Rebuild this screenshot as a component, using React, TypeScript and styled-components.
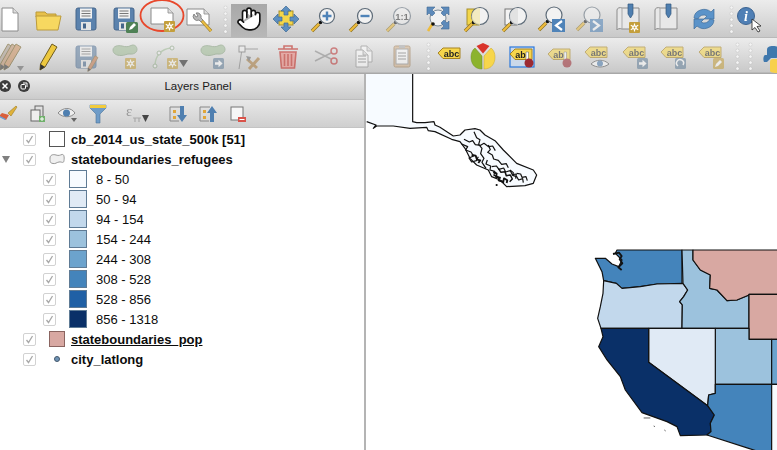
import React from "react";
import styled, { createGlobalStyle } from "styled-components";
import { Hand } from "lucide-react";

const GlobalStyle = createGlobalStyle`
  html, body {
    margin: 0;
    padding: 0;
    background: #fff;
  }
  #root {
    width: 777px;
    height: 450px;
    overflow: hidden;
  }
`;

const Window = styled.div`
  width: 777px;
  height: 450px;
  display: flex;
  flex-direction: column;
  overflow: hidden;
  font-family: "Liberation Sans", Arial, sans-serif;
`;

const ToolRow = styled.div<{ $height: number; $pad: number }>`
  flex: none;
  box-sizing: border-box;
  height: ${(p) => p.$height}px;
  display: flex;
  align-items: stretch;
  margin-left: -9px;
  width: 800px;
  padding-top: ${(p) => p.$pad}px;
  border-bottom: 1px solid #b9b9b9;
  background: linear-gradient(#ececec, #e2e2e2 30%, #c9c9c9);
`;

const Tool = styled.div<{ $w?: number; $dim?: boolean; $active?: boolean }>`
  position: relative;
  flex: none;
  width: ${(p) => p.$w ?? 38}px;
  display: flex;
  align-items: center;
  justify-content: center;
  background: ${(p) =>
    p.$active ? "linear-gradient(transparent 3px, #a8a8a8 3px, #b8b8b8)" : "none"};
  svg {
    flex: none;
    overflow: visible;
    opacity: ${(p) => (p.$dim ? 0.55 : 1)};
    filter: blur(0.35px);
  }
`;

const Handle = styled.div<{ $w: number }>`
  flex: none;
  width: ${(p) => p.$w}px;
  display: flex;
  flex-direction: column;
  align-items: center;
  justify-content: center;
  gap: 3px;
  i {
    width: 3px;
    height: 3px;
    border-radius: 50%;
    background: #f4f4f4;
    box-shadow: 0 0 1px #999;
  }
`;

const Annotation = styled.svg`
  position: absolute;
  left: -3px;
  top: -3px;
  width: 46px;
  height: 36px;
  filter: none !important;
`;

const Main = styled.div`
  flex: 1;
  min-height: 0;
  display: flex;
  border-top: 1px solid #a8a8a8;
`;

const Panel = styled.div`
  flex: none;
  box-sizing: border-box;
  width: 366px;
  display: flex;
  flex-direction: column;
  border-right: 2px solid #b4b4b4;
`;

const TitleBar = styled.div`
  flex: none;
  height: 26px;
  display: flex;
  align-items: center;
  padding-bottom: 2px;
  background: linear-gradient(#ececec, #cbcbcb);
  border-bottom: 1px solid #bdbdbd;
  box-sizing: border-box;
`;

const DockButton = styled.div`
  flex: none;
  width: 12px;
  height: 12px;
  margin-left: -1px;
  margin-right: 8px;
  border-radius: 50%;
  background: #3c3c3c;
  display: flex;
  align-items: center;
  justify-content: center;
`;

const PanelTitle = styled.div`
  flex: 1;
  text-align: center;
  font-size: 11.5px;
  color: #1a1a1a;
  padding-right: 6px;
`;

const PanelTools = styled.div`
  flex: none;
  box-sizing: border-box;
  height: 28px;
  display: flex;
  align-items: center;
  margin-left: -7px;
  background: linear-gradient(#e8e8e8, #cfcfcf);
  border-bottom: 1px solid #c4c4c4;
  width: 371px;
`;

const PanelTool = styled(Tool)`
  width: ${(p) => p.$w ?? 30}px;
  height: 26px;
`;

const LayerList = styled.div`
  flex: 1;
  background: #fff;
  padding-top: 1px;
`;

const LayerRow = styled.div<{ $child?: boolean }>`
  height: 20px;
  display: flex;
  align-items: center;
  padding-left: ${(p) => (p.$child ? 43 : 23)}px;
  position: relative;
`;

const Expander = styled.span`
  position: absolute;
  left: 2px;
  top: 7px;
  width: 0;
  height: 0;
  border-left: 4px solid transparent;
  border-right: 4px solid transparent;
  border-top: 7px solid #808080;
`;

const CheckBox = styled.span`
  flex: none;
  box-sizing: border-box;
  width: 13px;
  height: 13px;
  border: 1px solid #d2d2d2;
  border-radius: 2px;
  background: #fff;
  display: flex;
  align-items: center;
  justify-content: center;
`;

const Symbol = styled.span`
  flex: none;
  width: 16px;
  height: 16px;
  margin-left: 13px;
  margin-right: 6px;
  display: flex;
  align-items: center;
  justify-content: center;
`;

const FillBox = styled.span<{ $fill: string; $border: string }>`
  box-sizing: border-box;
  width: 16px;
  height: 16px;
  background: ${(p) => p.$fill};
  border: 1px solid ${(p) => p.$border};
`;

const LayerName = styled.span<{ $underline?: boolean }>`
  font-size: 13px;
  font-weight: 700;
  color: #0c0c0c;
  white-space: nowrap;
  text-decoration: ${(p) => (p.$underline ? "underline" : "none")};
`;

const ClassSwatch = styled.span<{ $fill: string }>`
  flex: none;
  box-sizing: border-box;
  width: 18px;
  height: 18px;
  margin-left: 13px;
  margin-right: 9px;
  background: ${(p) => p.$fill};
  border: 1px solid #5f7b95;
`;

const ClassName = styled.span`
  font-size: 13px;
  color: #0c0c0c;
  white-space: nowrap;
`;

const MapCanvas = styled.svg`
  flex: 1;
  display: block;
  height: 376px;
  background: #fff;
`;

/* ---- icon parts ---- */

const Ico = ({ children }: { children: React.ReactNode }) => (
  <svg width={32} height={32} viewBox="0 0 32 32">
    {children}
  </svg>
);

const GearBadge = ({ x, y, s = 11 }: { x: number; y: number; s?: number }) => {
  const c = s / 2;
  return (
    <g transform={`translate(${x} ${y})`}>
      <rect width={s} height={s} rx="1" fill="#c49f3c" />
      <g stroke="#fff" strokeWidth="1.2">
        <line x1={c} y1={1.5} x2={c} y2={s - 1.5} />
        <line x1={1.8} y1={c - 2.2} x2={s - 1.8} y2={c + 2.2} />
        <line x1={1.8} y1={c + 2.2} x2={s - 1.8} y2={c - 2.2} />
      </g>
      <circle cx={c} cy={c} r={2.2} fill="#fff" />
      <circle cx={c} cy={c} r={0.9} fill="#c49f3c" />
    </g>
  );
};

const ArrowBadge = ({ x, y }: { x: number; y: number }) => (
  <g transform={`translate(${x} ${y})`}>
    <rect width="11" height="11" rx="1.5" fill="#64809a" />
    <path d="M2 4.2h3.5V1.8L9.6 5.5 5.5 9.2V6.8H2z" fill="#fff" />
  </g>
);

const Page = ({ x, y, w, h }: { x: number; y: number; w: number; h: number }) => (
  <g>
    <path d={`M${x} ${y}h${w - 5}l5 5v${h - 5}h-${w}z`} fill="#fff" stroke="#8a8a8a" strokeWidth="1" />
    <path d={`M${x + w - 5} ${y}v5h5`} fill="#ddd" stroke="#8a8a8a" strokeWidth="0.8" />
  </g>
);

const Floppy = ({ tone = "#5b82ad" }: { tone?: string }) => (
  <g>
    <rect x="6" y="5" width="20" height="22" rx="2" fill={tone} stroke="#46668b" />
    <rect x="10" y="5.5" width="12" height="10" fill="#f1f1f1" />
    <path d="M11.5 8h9M11.5 10.5h9M11.5 13h9" stroke="#777" strokeWidth="1" />
    <rect x="11" y="19" width="10" height="8" fill="#e4e4e4" />
    <rect x="13" y="20.5" width="3" height="5" fill="#46668b" />
  </g>
);

const Lens = ({ children, cx = 19, cy = 13, r = 7.5 }: { children?: React.ReactNode; cx?: number; cy?: number; r?: number }) => (
  <g>
    <line x1={cx - 8} y1={cy + 8} x2={cx - 15} y2={cy + 15} stroke="#8a6f22" strokeWidth="3.4" />
    <line x1={cx - 8} y1={cy + 8} x2={cx - 15} y2={cy + 15} stroke="#eebc3c" strokeWidth="2.2" />
    <circle cx={cx - 6.5} cy={cy + 6.5} r="1.8" fill="#111" />
    <circle cx={cx} cy={cy} r={r} fill="#f2f2f2" stroke="#5d6b78" strokeWidth="1.2" />
    {children}
  </g>
);

const Blob = () => (
  <path
    d="M5 9c0-4 5-5 9-4s6 1 9-.5 6 .5 6 4-4 5-7 4.5-5 1.5-9 1.5-8-1.5-8-5.5z"
    fill="#9fbb95"
    stroke="#7f9a78"
  />
);

const Tag = ({ label = "abc", x = 5, y = 7, cut = false }: { label?: string; x?: number; y?: number; cut?: boolean }) => (
  <g transform={`translate(${x} ${y})`}>
    <path d="M0 5l5-5h17v10.5H5z" fill="#f7d64b" stroke="#a78320" />
    <text
      x={cut ? 10.5 : 13.5}
      y="8.6"
      textAnchor="middle"
      fontSize="9"
      fontWeight="700"
      fontFamily="Liberation Sans"
      fill="#222"
    >
      {label}
    </text>
  </g>
);

const Pencil = ({ x = 0, y = 0, s = 1, fill = "#edc83f" }: { x?: number; y?: number; s?: number; fill?: string }) => (
  <g transform={`translate(${x} ${y}) scale(${s})`}>
    <path d="M20 3l5 3-12 20-5 3 .5-6z" fill={fill} stroke="#6d5a1e" />
    <path d="M8.5 23l4.5 3-5 3z" fill="#333" />
  </g>
);

const Book = ({ children }: { children?: React.ReactNode }) => (
  <g>
    <path d="M5 7c0-2 3-3 5-2h17v21H10c-2-1-5 0-5 1z" fill="#e8e8e8" stroke="#8b8b8b" />
    <path d="M10 5v21" stroke="#aaa" />
    <path d="M16 1h5v10l-2.5 4-2.5-4z" fill="#4f7fb0" stroke="#34597e" strokeWidth="0.7" />
    {children}
  </g>
);

const Pin = ({ x }: { x: number }) => (
  <g>
    <path d={`M${x} 11h2.5v9h-2.5z`} fill="#fff" stroke="#555" strokeWidth="0.5" />
    <circle cx="23" cy="22" r="4.5" fill="#9c2a32" />
  </g>
);

/* ---- data ---- */

const classes = [
  ["8 - 50", "#f7fbff"],
  ["50 - 94", "#e0eaf5"],
  ["94 - 154", "#c2d8ec"],
  ["154 - 244", "#9cc2dd"],
  ["244 - 308", "#6ca3cd"],
  ["308 - 528", "#4484bb"],
  ["528 - 856", "#2060a5"],
  ["856 - 1318", "#0a3068"],
];

const Check = () => (
  <svg width="11" height="11" viewBox="0 0 11 11">
    <path d="M2.5 6l2 2.5L8.5 2" fill="none" stroke="#a8a8a8" strokeWidth="1.3" />
  </svg>
);

const Dots = ({ w }: { w: number }) => (
  <Handle $w={w}>
    <i />
    <i />
    <i />
    <i />
    <i />
  </Handle>
);

function TopToolbar() {
  return (
    <ToolRow $height={38} $pad={1}>
      <Tool>
        <Ico><Page x={8} y={5} w={16} h={23} /></Ico>
      </Tool>
      <Tool>
        <Ico>
          <path d="M4 9h9l2 2h9v3H4z" fill="#e7c04a" stroke="#bb9a3a" />
          <path d="M4 13h25l-3 14H5z" fill="#f7d860" stroke="#bb9a3a" />
        </Ico>
      </Tool>
      <Tool>
        <Ico><Floppy /></Ico>
      </Tool>
      <Tool>
        <Ico>
          <Floppy />
          <rect x="18" y="19" width="12" height="11" rx="1.5" fill="#4f8156" />
          <path d="M21 27l1-3 4-4 2 2-4 4z" fill="#fff" />
        </Ico>
      </Tool>
      <Tool>
        <Annotation viewBox="0 0 46 36">
          <ellipse cx="22" cy="17.5" rx="21.5" ry="15.5" fill="none" stroke="#e8482c" strokeWidth="1.8" />
        </Annotation>
        <Ico>
          <Page x={5} y={5} w={22} h={16} />
          <GearBadge x={18} y={18} />
        </Ico>
      </Tool>
      <Tool>
        <Ico>
          <Page x={3} y={6} w={22} h={16} />
          <path d="M10 11a4 4 0 0 0 5 6l2 2 2-2-2-2a4 4 0 0 0-5-5l2 3-2 1z" fill="#b9b9b9" stroke="#666" strokeWidth="0.7" />
          <line x1="18" y1="18" x2="27" y2="28" stroke="#8a6f22" strokeWidth="3.2" />
          <line x1="18" y1="18" x2="27" y2="28" stroke="#e8bb42" strokeWidth="2.2" />
        </Ico>
      </Tool>
      <Dots w={12} />
      <Tool $w={36} $active>
        <Hand size={26} fill="#fff" color="#111" strokeWidth={1.5} />
      </Tool>
      <Tool>
        <Ico>
          <rect x="9" y="8" width="14" height="14" fill="#f3d64a" stroke="#a88f2a" />
          <g fill="#5d8fc0" stroke="#3e6a95" strokeWidth="0.7">
            <path d="M16 3l5 5h-3v4h-4V8h-3z" />
            <path d="M16 29l5-5h-3v-4h-4v4h-3z" />
            <path d="M3 16l5-5v3h4v4H8v3z" />
            <path d="M29 16l-5-5v3h-4v4h4v3z" />
          </g>
        </Ico>
      </Tool>
      <Tool>
        <Ico>
          <Lens>
            <path d="M19 8.5v9M14.5 13h9" stroke="#4f83b8" strokeWidth="2.4" />
          </Lens>
        </Ico>
      </Tool>
      <Tool>
        <Ico>
          <Lens>
            <path d="M14.5 13h9" stroke="#4f83b8" strokeWidth="2.4" />
          </Lens>
        </Ico>
      </Tool>
      <Tool $dim>
        <Ico>
          <Lens cx={18} r={8.5}>
            <text x="18" y="16.5" textAnchor="middle" fontSize="9.5" fontWeight="700" fontFamily="Liberation Sans" fill="#333">
              1:1
            </text>
          </Lens>
        </Ico>
      </Tool>
      <Tool>
        <Ico>
          <circle cx="16" cy="15" r="8" fill="#f2f2f2" stroke="#7d8c9a" />
          <g fill="#5d8aba" stroke="#3f6a95" strokeWidth="0.6">
            <path d="M5 4h8l-3 3 3 3-3 3-3-3-2 2z" />
            <path d="M27 4h-8l3 3-3 3 3 3 3-3 2 2z" />
            <path d="M27 26h-8l3-3-3-3 3-3 3 3 2-2z" />
          </g>
          <line x1="11" y1="20" x2="6" y2="28" stroke="#eebc3c" strokeWidth="2.6" />
          <circle cx="11" cy="21" r="1.8" fill="#111" />
        </Ico>
      </Tool>
      <Tool>
        <Ico>
          <rect x="7" y="6" width="12" height="16" fill="#f3d64a" stroke="#a88f2a" />
          <Lens cx={20} cy={13} r={8.5}>
            <path d="M20 5a8.5 8.5 0 0 0 0 17z" fill="#f3e9b4" opacity="0.8" />
          </Lens>
        </Ico>
      </Tool>
      <Tool>
        <Ico>
          <rect x="7" y="6" width="12" height="16" fill="#f3f3f3" stroke="#777" />
          <Lens cx={20} cy={13} r={8.5}>
            <path d="M20 5a8.5 8.5 0 0 0 0 17z" fill="#ddd" opacity="0.8" />
          </Lens>
        </Ico>
      </Tool>
      <Tool>
        <Ico>
          <Lens cx={18} cy={12} r={8} />
          <rect x="16" y="16" width="13" height="13" fill="#4f83b8" />
          <path d="M26 18l-6 4.5 6 4.5" fill="none" stroke="#fff" strokeWidth="2.2" />
        </Ico>
      </Tool>
      <Tool $dim>
        <Ico>
          <Lens cx={18} cy={12} r={8} />
          <rect x="16" y="16" width="13" height="13" fill="#4f83b8" />
          <path d="M19 18l6 4.5-6 4.5" fill="none" stroke="#fff" strokeWidth="2.2" />
        </Ico>
      </Tool>
      <Tool>
        <Ico>
          <Book>
            <GearBadge x={17} y={19} />
          </Book>
        </Ico>
      </Tool>
      <Tool>
        <Ico>
          <Book />
        </Ico>
      </Tool>
      <Tool>
        <Ico>
          <path d="M6 15a10 9 0 0 1 17-6l3-3v10h-10l3-3a6 6 0 0 0-9 3z" fill="#5b93c9" stroke="#3f6d9b" strokeWidth="0.7" />
          <path d="M26 17a10 9 0 0 1-17 6l-3 3V16h10l-3 3a6 6 0 0 0 9-3z" fill="#5b93c9" stroke="#3f6d9b" strokeWidth="0.7" />
        </Ico>
      </Tool>
      <Dots w={16} />
      <Tool $w={20}>
        <Ico>
          <circle cx="13" cy="13" r="8.5" fill="#4f7fb5" stroke="#3b6391" />
          <text x="13" y="18" textAnchor="middle" fontSize="14" fontWeight="700" fontStyle="italic" fontFamily="Liberation Serif" fill="#fff">
            i
          </text>
          <path d="M19 16v11l3-2.5 3 4.5 2-1-3-4.5 4-.5z" fill="#fff" stroke="#222" strokeWidth="0.8" />
        </Ico>
      </Tool>
    </ToolRow>
  );
}

function EditToolbar() {
  return (
    <ToolRow $height={35} $pad={3}>
      <Tool $dim>
        <Ico>
          <Pencil x={-6} fill="#a89a8c" />
          <Pencil x={-2} fill="#bd8f6a" />
          <Pencil x={2} fill="#c98d5a" />
          <path d="M23 25h7l-3.5 5z" fill="#666" />
        </Ico>
      </Tool>
      <Tool>
        <Ico><Pencil /></Ico>
      </Tool>
      <Tool $dim>
        <Ico>
          <Floppy tone="#5d7d9f" />
          <Pencil x={13} y={13} s={0.6} fill="#c4784c" />
        </Ico>
      </Tool>
      <Tool $dim>
        <Ico>
          <Blob />
          <GearBadge x={17} y={17} />
        </Ico>
      </Tool>
      <Tool $w={50} $dim>
        <svg width="46" height="32" viewBox="0 0 46 32">
          <path d="M10 25c0-10 6-17 16-18" fill="none" stroke="#9fbb95" strokeWidth="1.4" />
          <circle cx="10" cy="25" r="2" fill="#eee" stroke="#85a07d" />
          <circle cx="14" cy="12" r="2" fill="#eee" stroke="#85a07d" />
          <circle cx="27" cy="7" r="2" fill="#eee" stroke="#85a07d" />
          <GearBadge x={22} y={17} />
          <path d="M34 19h9l-4.5 7z" fill="#222" />
        </svg>
      </Tool>
      <Tool $dim>
        <Ico>
          <Blob />
          <ArrowBadge x={17} y={17} />
        </Ico>
      </Tool>
      <Tool $dim>
        <Ico>
          <path d="M8 8l-3 20M8 8h16" fill="none" stroke="#777" />
          <rect x="5" y="5" width="6" height="6" fill="#eee" stroke="#666" />
          <path d="M13 18l10 9M25 17L15 28" stroke="#a87a3c" strokeWidth="3" />
          <path d="M12 15l5 1-2 5z" fill="#666" />
        </Ico>
      </Tool>
      <Tool>
        <Ico>
          <g opacity="0.75" fill="none" stroke="#c74f49" strokeWidth="1.6">
            <path d="M6 8h20M12 8V5h8v3" />
            <path d="M8 11h16l-1.5 16h-13z" fill="#e79a94" />
            <path d="M12.5 13v12M16 13v12M19.5 13v12" />
          </g>
        </Ico>
      </Tool>
      <Tool $dim>
        <Ico>
          <path d="M5 10l16 8M5 20l16-8" stroke="#888" strokeWidth="1.5" />
          <circle cx="24" cy="10" r="3" fill="none" stroke="#b33" strokeWidth="1.5" />
          <circle cx="24" cy="20" r="3" fill="none" stroke="#b33" strokeWidth="1.5" />
        </Ico>
      </Tool>
      <Tool $dim>
        <Ico>
          <Page x={13} y={5} w={11} h={16} />
          <Page x={8} y={9} w={12} h={17} />
          <path d="M10 15h8M10 18h8M10 21h8" stroke="#777" />
        </Ico>
      </Tool>
      <Tool $dim>
        <Ico>
          <rect x="8" y="5" width="16" height="21" rx="1.5" fill="#d7b48c" stroke="#9b7b55" />
          <rect x="10" y="8" width="12" height="15" fill="#fff" stroke="#888" />
          <rect x="13" y="4" width="6" height="3" fill="#aaa" />
          <path d="M12 12h8M12 15h8M12 18h8" stroke="#777" />
        </Ico>
      </Tool>
      <Dots w={14} />
      <Tool $w={28}>
        <Ico><Tag /></Ico>
      </Tool>
      <Tool $w={40}>
        <Ico>
          <path d="M9.5 5l6.5-3 6.5 3-6.5 7.5z" fill="#d9342b" />
          <path d="M8 7l7 8v13C7 28 4 22 4 16c0-3 1-7 4-9z" fill="#8cb32d" stroke="#6c8f20" strokeWidth="0.5" />
          <path d="M24 7l-7 8v13c8 0 11-6 11-12 0-3-1-7-4-9z" fill="#f7d64b" stroke="#c9a82d" strokeWidth="0.5" />
        </Ico>
      </Tool>
      <Tool>
        <Ico>
          <rect x="4" y="6" width="24" height="20" fill="#cbd9ea" stroke="#2a78dc" strokeWidth="1.2" />
          <Tag label="ab" x={4} y={8} cut />
          <Pin x={20} />
        </Ico>
      </Tool>
      <Tool $dim>
        <Ico>
          <Tag label="ab" x={4} y={8} cut />
          <Pin x={20} />
        </Ico>
      </Tool>
      <Tool $dim>
        <Ico>
          <Tag x={3} y={6} />
          <path d="M9 23c5-5 13-5 18 0-5 4-13 4-18 0z" fill="#fff" stroke="#555" />
          <circle cx="18" cy="22.5" r="3" fill="#4f7fb0" />
        </Ico>
      </Tool>
      <Tool $dim>
        <Ico>
          <Tag x={3} y={6} />
          <ArrowBadge x={17} y={17} />
        </Ico>
      </Tool>
      <Tool $dim>
        <Ico>
          <Tag x={3} y={6} />
          <rect x="17" y="17" width="11" height="11" rx="1.5" fill="#64809a" />
          <path d="M20 25a3.5 3.5 0 1 1 5-1" fill="none" stroke="#fff" strokeWidth="1.5" />
        </Ico>
      </Tool>
      <Tool $dim>
        <Ico>
          <Tag x={3} y={6} />
          <rect x="17" y="17" width="11" height="11" rx="1.5" fill="#c49f3c" />
          <path d="M19 26l1-3 4-4 2 2-4 4z" fill="#fff" />
        </Ico>
      </Tool>
      <Dots w={13} />
      <Dots w={12} />
      <Tool $w={34}>
        <Ico>
          <g transform="translate(-6 0)">
            <path d="M16 20V9c0-3 2-4 6-4s6 1 6 4v5c0 2-1 3-3 3h-6c-2 0-3 1-3 3z" fill="#3f78ad" />
            <path d="M16 21h-3c-1-2-1-6 1-7h8v1" fill="#3f78ad" />
            <path d="M19 30v-9c0-2 1-3 3-3h6c2 0 3-1 3-3v14c0 2-3 3-6 3s-6-1-6-2z" fill="#f7d04b" />
          </g>
        </Ico>
      </Tool>
    </ToolRow>
  );
}

function PanelToolbar() {
  return (
    <PanelTools>
      <PanelTool>
        <svg width="20" height="20" viewBox="0 0 20 20">
          <path d="M10 9l8-7 1 1-6 9z" fill="#e0b23a" stroke="#9a7a24" strokeWidth="0.6" />
          <path d="M4 9l7 2-3 5-7-4z" fill="#d95f3a" />
          <path d="M2 12l6 3-1 1-6-3z" fill="#6b9bd0" />
        </svg>
      </PanelTool>
      <PanelTool>
        <svg width="20" height="20" viewBox="0 0 20 20">
          <rect x="7" y="2" width="8" height="12" fill="none" stroke="#666" />
          <rect x="3" y="6" width="9" height="11" fill="#eee" stroke="#666" />
          <rect x="11" y="12" width="6" height="6" fill="#6fb06a" />
          <path d="M14 13v4M12 15h4" stroke="#fff" />
        </svg>
      </PanelTool>
      <PanelTool>
        <svg width="22" height="20" viewBox="0 0 22 20" opacity="0.8">
          <path d="M1 9c5-6 13-6 17 0-4 5-12 5-17 0z" fill="#eee" stroke="#8a8a8a" />
          <circle cx="9.5" cy="9" r="3.5" fill="#4f7fb0" />
          <path d="M14 14h6l-3 4z" fill="#666" />
        </svg>
      </PanelTool>
      <PanelTool>
        <svg width="20" height="22" viewBox="0 0 20 22">
          <path d="M2 2h16v3l-6 6v9h-4v-9L2 5z" fill="#6f9cc8" stroke="#4c7499" strokeWidth="0.6" />
          <path d="M2 2h16v3H2z" fill="#f2cb3c" />
        </svg>
      </PanelTool>
      <PanelTool $w={50}>
        <svg width="28" height="20" viewBox="0 0 28 20">
          <text x="2" y="12" fontSize="15" fontFamily="Liberation Serif" fill="#999">ε</text>
          <path d="M9 14h8M11 14v4M15 14v4" stroke="#aaa" strokeWidth="1.2" fill="none" />
          <path d="M18 11h7l-3.5 7z" fill="#444" />
        </svg>
      </PanelTool>
      <PanelTool>
        <svg width="22" height="20" viewBox="0 0 22 20">
          <path d="M3 3h10M3 3v14h9" fill="none" stroke="#888" />
          <rect x="6" y="6" width="3" height="3" fill="#e0a63a" />
          <rect x="6" y="12" width="3" height="3" fill="#e0a63a" />
          <path d="M13 2h4v9h3l-5 7-5-7h3z" fill="#4f7fb0" />
        </svg>
      </PanelTool>
      <PanelTool>
        <svg width="22" height="20" viewBox="0 0 22 20">
          <path d="M3 3h10M3 3v14h9" fill="none" stroke="#888" />
          <rect x="6" y="6" width="3" height="3" fill="#e0a63a" />
          <rect x="6" y="12" width="3" height="3" fill="#e0a63a" />
          <path d="M13 18h4V9h3l-5-7-5 7h3z" fill="#4f7fb0" />
        </svg>
      </PanelTool>
      <PanelTool>
        <svg width="20" height="20" viewBox="0 0 20 20">
          <rect x="3" y="3" width="12" height="13" fill="#f6f6f6" stroke="#777" />
          <rect x="10" y="13" width="8" height="5" fill="#d9534a" />
          <path d="M11.5 15.5h5" stroke="#fff" />
        </svg>
      </PanelTool>
    </PanelTools>
  );
}

function LayersTree() {
  return (
    <LayerList>
      <LayerRow>
        <CheckBox><Check /></CheckBox>
        <Symbol><FillBox $fill="#fff" $border="#555" /></Symbol>
        <LayerName>cb_2014_us_state_500k [51]</LayerName>
      </LayerRow>
      <LayerRow>
        <Expander />
        <CheckBox><Check /></CheckBox>
        <Symbol>
          <svg width="16" height="13" viewBox="0 0 16 13">
            <path d="M1 5c0-3 3-4 6-3s4 0 6-.5 2.500 2.500 2 6-2 1-5 1.500-3 2-6 1.500S1 9 1 5z" fill="#f0f0f0" stroke="#999" />
          </svg>
        </Symbol>
        <LayerName>stateboundaries_refugees</LayerName>
      </LayerRow>
      {classes.map(([label, fill]) => (
        <LayerRow $child key={label}>
          <CheckBox><Check /></CheckBox>
          <ClassSwatch $fill={fill} />
          <ClassName>{label}</ClassName>
        </LayerRow>
      ))}
      <LayerRow>
        <CheckBox><Check /></CheckBox>
        <Symbol><FillBox $fill="#d8a8a2" $border="#8a6460" /></Symbol>
        <LayerName $underline>stateboundaries_pop</LayerName>
      </LayerRow>
      <LayerRow>
        <CheckBox><Check /></CheckBox>
        <Symbol>
          <svg width="8" height="8" viewBox="0 0 8 8">
            <circle cx="4" cy="4" r="2.5" fill="#6f93b5" stroke="#44586c" />
          </svg>
        </Symbol>
        <LayerName>city_latlong</LayerName>
      </LayerRow>
    </LayerList>
  );
}

function StatesMap() {
  return (
    <MapCanvas viewBox="0 0 411 376">
      <g transform="translate(-6 -4) scale(0.3333)" stroke="#111" strokeWidth="3.6" strokeLinejoin="round">
        <path
          d="M18 12H158V155L170 158 195 158 222 155 225 165 240 172 280 198 300 195 315 180 345 176 360 180 375 195 405 212 430 240 470 280 520 300 530 315 520 340 495 347 440 350 420 330 395 320 385 300 350 285 330 265 315 235 300 215 275 208 225 185 205 182 200 172 150 175 100 168 50 168 40 175 20 155z"
          fill="#f7fbff"
          stroke="none"
        />
        <path
          d="M158 12V155L170 158 195 158 222 155 225 165 240 172 280 198 300 195 315 180 345 176 360 180 375 195 405 212 430 240 470 280 520 300 530 315 520 340 495 347 440 350 420 330 395 320 385 300 350 285 330 265 315 235 300 215 275 208 225 185 205 182 200 172 150 175 100 168 50 168 40 175 48 165 20 155"
          fill="none"
        />
        <g fill="none" strokeWidth="3.6">
          <path d="M342 185l8 18 10 6-4 14 10 12-4 16 10 14-6 12 12 18" />
          <path d="M312 208l16 8 10-4 8 12 16 2 10-6 14 10 12-2 8 14" />
          <path d="M305 222l18 8-6 10 16 6 8 12-14 6 8 12 14-4 6-12" />
          <path d="M335 255l12 2 4 12 10 2-6 8" strokeWidth="5.5" />
          <path d="M385 225l6 14-8 8 14 8 4 12 14 4 10 12 14-2 6 12" />
          <path d="M382 270l-4 12 14 6-2 12 14 4-2 12 12 4 4 12 14 6" />
          <path d="M395 290l14-2 8 10 14-4 6 12 14-4 6 12 12-2-2 14" />
          <path d="M400 305l10 6-2 10 12 2-4 8 14 4 2-10 10 6-2 8" strokeWidth="5.5" />
          <path d="M415 295l8 12 12-2 4 12 12-2 6 12-8 8" strokeWidth="4.5" />
          <path d="M450 300l10 8-2 8 12 4 6 10 12-4 2 12" />
          <path d="M470 310l12 2 4 10 12-2 4 12" />
        </g>
        <circle cx="410" cy="345" r="1.5" />
      </g>
      <g transform="translate(211 166) scale(0.3333)" stroke="#111" strokeWidth="3.6" strokeLinejoin="round">
        <path fill="#4484bb" d="M120 30H315V130L240 132 190 140 135 145 118 130 80 122 75 95 55 55 85 55 105 72 125 80 135 60 115 40z" />
        <path fill="#c2d8ec" d="M80 122L118 130 135 145 190 140 240 132 318 130 332 150 320 170 308 185 316 195 315 265H72L62 235 70 200 78 160z" />
        <path fill="#9cc2dd" d="M315 30H348V60L370 90 400 105 398 145 420 150 450 182 480 180 516 165V265H315L316 195 308 185 320 170 332 150 318 130z" />
        <path fill="#d8a8a2" d="M348 30H640V163H516V165L480 180 450 182 420 150 398 145 400 105 370 90 348 60z" />
        <path fill="#d8a8a2" d="M516 163H640V298H516z" />
        <path fill="#9cc2dd" d="M415 265H516V298H584V433H415z" />
        <path fill="#6ca3cd" d="M584 298H640V433H584z" />
        <path fill="#e0eaf5" d="M215 265H415V460L395 465 392 497 215 367z" />
        <path fill="#0a3068" d="M72 265H215V367L392 497 412 525 400 550 402 575 390 585 310 587 300 560 270 545 195 518 145 450 130 410 90 360 65 320 78 290z" />
        <path fill="#4484bb" d="M415 433H584V640H560L515 625 390 585 402 575 400 550 412 525 392 497 395 465 415 460z" />
        <path fill="#f7fbff" d="M584 433H640V640H584z" />
        <path fill="none" strokeWidth="5.5" d="M108 42l18-4 8 10-6 10 8 12-12 12 10 8" />
        <path fill="none" strokeWidth="2" d="M200 534h20M230 558l4 2M262 570l4 3" />
      </g>
    </MapCanvas>
  );
}

export default function App() {
  return (
    <Window>
      <GlobalStyle />
      <TopToolbar />
      <EditToolbar />
      <Main>
        <Panel>
          <TitleBar>
            <DockButton>
              <svg width="8" height="8" viewBox="0 0 8 8">
                <path d="M1.5 1.5l5 5M6.5 1.5l-5 5" stroke="#fff" strokeWidth="1.5" />
              </svg>
            </DockButton>
            <DockButton>
              <svg width="8" height="8" viewBox="0 0 8 8">
                <rect x="1" y="2.5" width="4.5" height="4.5" rx="1" fill="none" stroke="#fff" />
                <path d="M3 1h4v4" fill="none" stroke="#fff" />
              </svg>
            </DockButton>
            <PanelTitle>Layers Panel</PanelTitle>
          </TitleBar>
          <PanelToolbar />
          <LayersTree />
        </Panel>
        <StatesMap />
      </Main>
    </Window>
  );
}
